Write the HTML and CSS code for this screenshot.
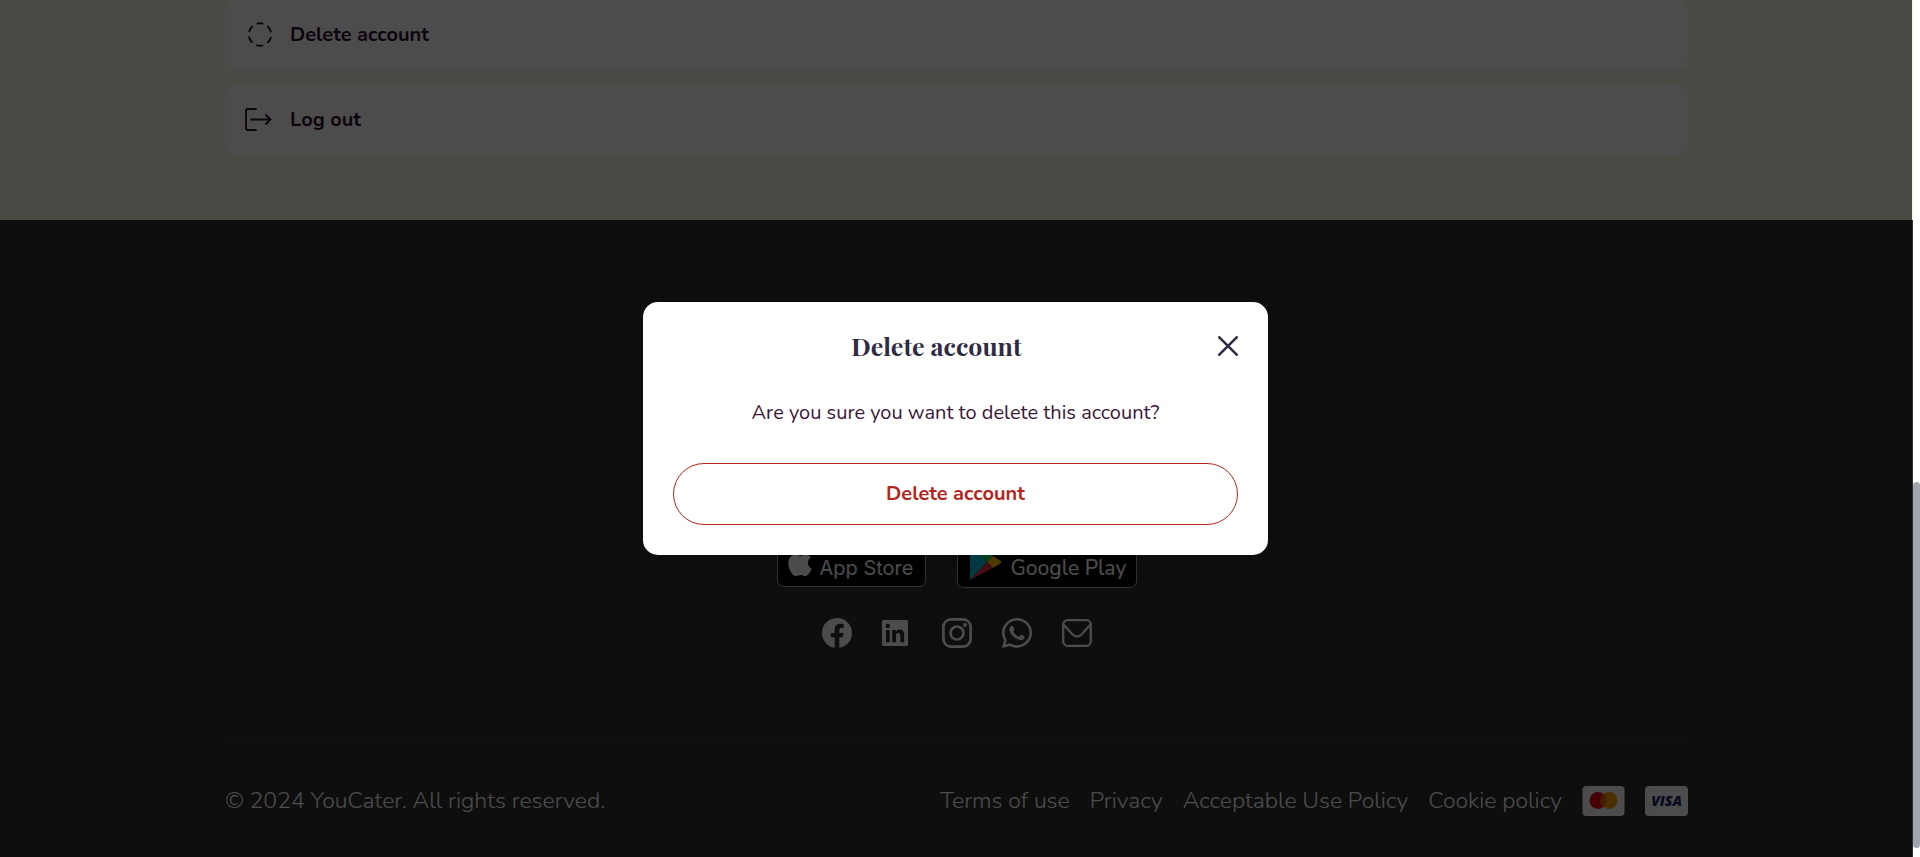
FILE: index.html
```html
<!DOCTYPE html>
<html lang="en">
<head>
<meta charset="utf-8">
<title>YouCater</title>
<link rel="stylesheet" href="styles.css">
</head>
<body>
<div class="viewport">
  <div class="page">
    <main class="account">
      <button class="account-row" type="button">
        <svg class="row-icon" viewBox="0 0 32 32" fill="none" stroke="currentColor" stroke-width="1.9" stroke-linecap="round"><circle cx="17" cy="16.500" r="11.2" stroke-dasharray="5.600 6.129" stroke-dashoffset="2.800" transform="rotate(-90 17 16.500)"/></svg>
        Delete account
      </button>
      <button class="account-row" type="button">
        <svg class="row-icon" viewBox="0 0 32 32" fill="none" stroke="currentColor" stroke-width="1.9" stroke-linecap="round" stroke-linejoin="round"><path d="M13 6H5Q3 6 3 8V25Q3 27 5 27H13M8 16.500H27.500M23 12L27.500 16.500L23 21"/></svg>
        Log out
      </button>
    </main>
    <footer class="footer">
      <div class="stores">
        <a class="store store-apple" href="#app-store">
          <svg class="store-icon apple-icon" viewBox="0 0 384 512" fill="currentColor"><path d="M318.700 268.700c-.2-36.700 16.400-64.400 50-84.800-18.800-26.900-47.200-41.700-84.700-44.600-35.500-2.800-74.300 20.700-88.500 20.700-15 0-49.400-19.700-76.400-19.700C63.300 141.200 4 184.800 4 273.500q0 39.300 14.400 81.200c12.800 36.700 59 126.700 107.200 125.200 25.200-.6 43-17.900 75.800-17.900 31.800 0 48.300 17.900 76.400 17.900 48.600-.7 90.400-82.500 102.600-119.300-65.200-30.700-61.700-90-61.700-91.900zm-56.600-164.200c27.300-32.400 24.800-61.900 24-72.500-24.100 1.400-52 16.400-67.900 34.900-17.500 19.800-27.800 44.300-25.600 71.900 26.100 2 49.900-11.400 69.500-34.300z"/></svg>
          <span class="store-text"><span class="store-small">Download on the</span><span class="store-name">App Store</span></span>
        </a>
        <a class="store store-google" href="#google-play">
          <svg class="store-icon play-icon" viewBox="0 0 31 36"><path fill="#00c4e8" d="M0 0L17 18L0 36Z"/><path fill="#00d95f" d="M0 0L23 12L17 18Z"/><path fill="#ffc400" d="M23 12L31 17Q32 18 31 19L23 24L17 18Z"/><path fill="#e9304a" d="M0 36L17 18L23 24Z"/></svg>
          <span class="store-text"><span class="store-small">GET IT ON</span><span class="store-name">Google Play</span></span>
        </a>
      </div>
      <div class="socials">
        <a href="#facebook" aria-label="Facebook"><svg viewBox="0 0 32 32"><path fill="currentColor" d="M31 16A15 15 0 1 0 13.650 30.820V20.340H9.850V16H13.650V12.700C13.650 8.940 15.890 6.860 19.320 6.860C20.960 6.860 22.680 7.150 22.680 7.150V10.840H20.790C18.920 10.840 18.340 12 18.340 13.190V16H22.510L21.840 20.340H18.340V30.820A15 15 0 0 0 31 16Z"/></svg></a>
        <a href="#linkedin" aria-label="LinkedIn"><svg viewBox="0 0 32 32"><path fill="currentColor" fill-rule="evenodd" d="M2.500 3H25.500Q27 3 27 4.500V27.500Q27 29 25.500 29H2.500Q1 29 1 27.500V4.500Q1 3 2.500 3ZM4.900 12.900V25.200H8.700V12.900ZM6.800 6.700A2.200 2.200 0 1 0 6.800 11.100A2.200 2.200 0 1 0 6.800 6.700ZM11.200 12.900V25.200H15V19Q15 16 17.200 16Q19.300 16 19.300 19V25.200H23.200V18.300Q23.200 12.600 18.600 12.600Q16.100 12.600 14.900 14.600V12.900Z"/></svg></a>
        <a href="#instagram" aria-label="Instagram"><svg viewBox="0 0 32 32" fill="none" stroke="currentColor" stroke-width="2.700"><rect x="2.400" y="2.400" width="27.200" height="27.200" rx="7.500"/><circle cx="16" cy="16" r="6.500"/><circle cx="24" cy="8" r="1.900" fill="currentColor" stroke="none"/></svg></a>
        <a href="#whatsapp" aria-label="WhatsApp"><svg viewBox="-14 18 476 476"><path fill="currentColor" d="M380.900 97.100C339 55.100 283.200 32 223.900 32c-122.400 0-222 99.600-222 222 0 39.100 10.200 77.300 29.600 111L0 480l117.700-30.900c32.400 17.700 68.900 27 106.100 27h.1c122.300 0 224.100-99.600 224.100-222 0-59.300-25.200-115-67.100-157zm-157 341.600c-33.200 0-65.700-8.900-94-25.700l-6.700-4-69.800 18.300L72 359.200l-4.400-7c-18.500-29.400-28.200-63.300-28.200-98.200 0-101.700 82.800-184.500 184.600-184.500 49.300 0 95.600 19.200 130.400 54.100 34.800 34.900 56.200 81.200 56.100 130.500 0 101.800-84.900 184.600-186.600 184.600zm101.200-138.200c-5.500-2.800-32.800-16.200-37.900-18-5.100-1.900-8.800-2.800-12.500 2.800-3.700 5.600-14.300 18-17.600 21.800-3.200 3.700-6.500 4.200-12 1.400-32.600-16.300-54-29.100-75.500-66-5.700-9.800 5.700-9.100 16.300-30.300 1.800-3.700.9-6.900-.5-9.700-1.400-2.800-12.500-30.100-17.100-41.200-4.500-10.800-9.100-9.300-12.500-9.500-3.200-.2-6.900-.2-10.600-.2-3.700 0-9.700 1.400-14.800 6.900-5.100 5.600-19.400 19-19.400 46.300 0 27.300 19.900 53.700 22.600 57.400 2.800 3.700 39.100 59.700 94.800 83.800 35.200 15.200 49 16.500 66.600 13.900 10.700-1.600 32.800-13.400 37.400-26.400 4.600-13 4.600-24.100 3.200-26.400-1.300-2.500-5-3.900-10.500-6.600z"/></svg></a>
        <a href="#mail" aria-label="Email"><svg viewBox="0 0 32 32" fill="none" stroke="currentColor" stroke-width="2.300"><rect x="2.200" y="3.200" width="27.600" height="25.600" rx="4.500"/><path d="M2.500 7.500L11.500 17.500Q16 21.500 20.500 17.500L29.500 7.500"/></svg></a>
      </div>
      <div class="legal">
        <span>© 2024 YouCater. All rights reserved.</span>
        <nav class="legal-links">
          <a href="#terms">Terms of use</a>
          <a href="#privacy">Privacy</a>
          <a href="#acceptable-use">Acceptable Use Policy</a>
          <a href="#cookies">Cookie policy</a>
          <svg class="card" viewBox="0 0 42 30" role="img" aria-label="Mastercard"><rect width="42" height="30" rx="4" fill="#fff"/><circle cx="15.500" cy="14.500" r="8.500" fill="#eb001b"/><circle cx="26.500" cy="14.500" r="8.500" fill="#f7a000"/><path d="M21 8A8.500 8.500 0 0 1 21 21A8.500 8.500 0 0 1 21 8Z" fill="#e06400"/></svg>
          <span class="card visa">VISA</span>
        </nav>
      </div>
    </footer>
    <div class="overlay">
      <section class="modal" role="dialog" aria-modal="true" aria-labelledby="modal-title">
        <header class="modal-head">
          <h2 class="modal-title" id="modal-title">Delete account</h2>
          <button class="close" type="button" aria-label="Close"><svg viewBox="0 0 20 20" fill="none" stroke="currentColor" stroke-width="2.600" stroke-linecap="round"><path d="M1.300 1.300L18.700 18.700M18.700 1.300L1.300 18.700"/></svg></button>
        </header>
        <p class="modal-text">Are you sure you want to delete this account?</p>
        <button class="danger" type="button">Delete account</button>
      </section>
    </div>
  </div>
  <div class="scroll-track"><div class="scroll-thumb"></div></div>
</div>
</body>
</html>
```

FILE: styles.css
```css
* {
  box-sizing: border-box;
}

body {
  margin: 0;
  font-family: Nunito, Lato, sans-serif;
  font-size: 20px;
}

a {
  color: inherit;
  text-decoration: none;
}

button {
  font: inherit;
  cursor: pointer;
}

.viewport {
  display: flex;
  height: 100vh;
  overflow: hidden;
}

.page {
  position: relative;
  display: flex;
  flex: 1;
  flex-direction: column;
}

.account {
  display: flex;
  flex-direction: column;
  gap: 15px;
  padding: 0 225px 65px;
  background: #f8f4df;
}

.account-row {
  display: flex;
  align-items: center;
  gap: 15px;
  height: 70px;
  padding: 0 18px 2px;
  border: 0;
  border-radius: 10px;
  background: #fff;
  color: #30102e;
  font-weight: 700;
}

.row-icon {
  width: 32px;
  height: 32px;
}

.footer {
  display: flex;
  flex: 1;
  flex-direction: column;
  align-items: center;
  justify-content: flex-end;
  padding: 0 225px;
  background: #2f2f2f;
  color: #fff;
}

.stores {
  display: flex;
  align-items: center;
  gap: 31px;
}

.store {
  display: flex;
  align-items: center;
  padding-top: 2px;
  border: 1px solid #a6a6a6;
  border-radius: 7px;
  background: #000;
  font-family: Inter, sans-serif;
}

.store-apple {
  width: 149px;
  height: 52px;
  padding-left: 10px;
  gap: 8px;
}

.store-google {
  width: 180px;
  height: 54px;
  padding-left: 12px;
  gap: 10px;
}

.apple-icon {
  width: 24px;
  height: 32px;
}

.play-icon {
  width: 31px;
  height: 36px;
}

.store-text {
  display: flex;
  flex-direction: column;
}

.store-small {
  font-size: 11px;
  line-height: 12px;
}

.store-name {
  font-size: 20px;
  line-height: 24px;
}

.store-google .store-name {
  font-family: Nunito, Lato, sans-serif;
  font-size: 21px;
  font-weight: 500;
}

.socials {
  display: flex;
  gap: 28px;
  padding: 29px 0 93px;
}

.socials svg {
  display: block;
  width: 32px;
  height: 32px;
}

.legal {
  display: flex;
  align-items: center;
  align-self: stretch;
  justify-content: space-between;
  height: 115px;
  padding-top: 2px;
  border-top: 1px solid #3c3c3c;
  font-size: 23px;
  font-weight: 300;
  line-height: 30px;
}

.legal-links {
  display: flex;
  align-items: center;
  gap: 20px;
}

.card {
  width: 43px;
  height: 30px;
}

.visa {
  border-radius: 4px;
  background: #fff;
  color: #1a1f71;
  font: italic 900 14px/30px "Open Sans", sans-serif;
  text-align: center;
}

.overlay {
  position: absolute;
  inset: 0 1px 0 0;
  display: flex;
  align-items: center;
  justify-content: center;
  padding-right: 1px;
  background: rgba(0, 0, 0, 0.7);
}

.modal {
  width: 625px;
  padding: 30px;
  border-radius: 15px;
  background: #fff;
  box-shadow: 0 0 24px rgba(47, 43, 67, 0.06);
  text-align: center;
}

.modal-head {
  display: flex;
  align-items: center;
}

.modal-title {
  flex: 1;
  margin: 0;
  color: #2f2b43;
  font: 700 25px/28px "Playfair Display", "Liberation Serif", serif;
}

.close {
  padding: 0 0 0 18px;
  border: 0;
  background: none;
  color: #2f2b43;
}

.close svg {
  display: block;
  width: 20px;
  height: 20px;
}

.modal-text {
  margin: 39px 0 36px;
  color: #3b1739;
  line-height: 28px;
}

.danger {
  width: 100%;
  height: 62px;
  padding-bottom: 2px;
  border: 1px solid #b3261e;
  border-radius: 31px;
  background: #fff;
  color: #b3261e;
  font-weight: 700;
}

.scroll-track {
  width: 7px;
  padding-top: 482px;
  background: #fff;
}

.scroll-thumb {
  height: 366px;
  border-radius: 4px;
  background: #9ea5ac;
}
```
